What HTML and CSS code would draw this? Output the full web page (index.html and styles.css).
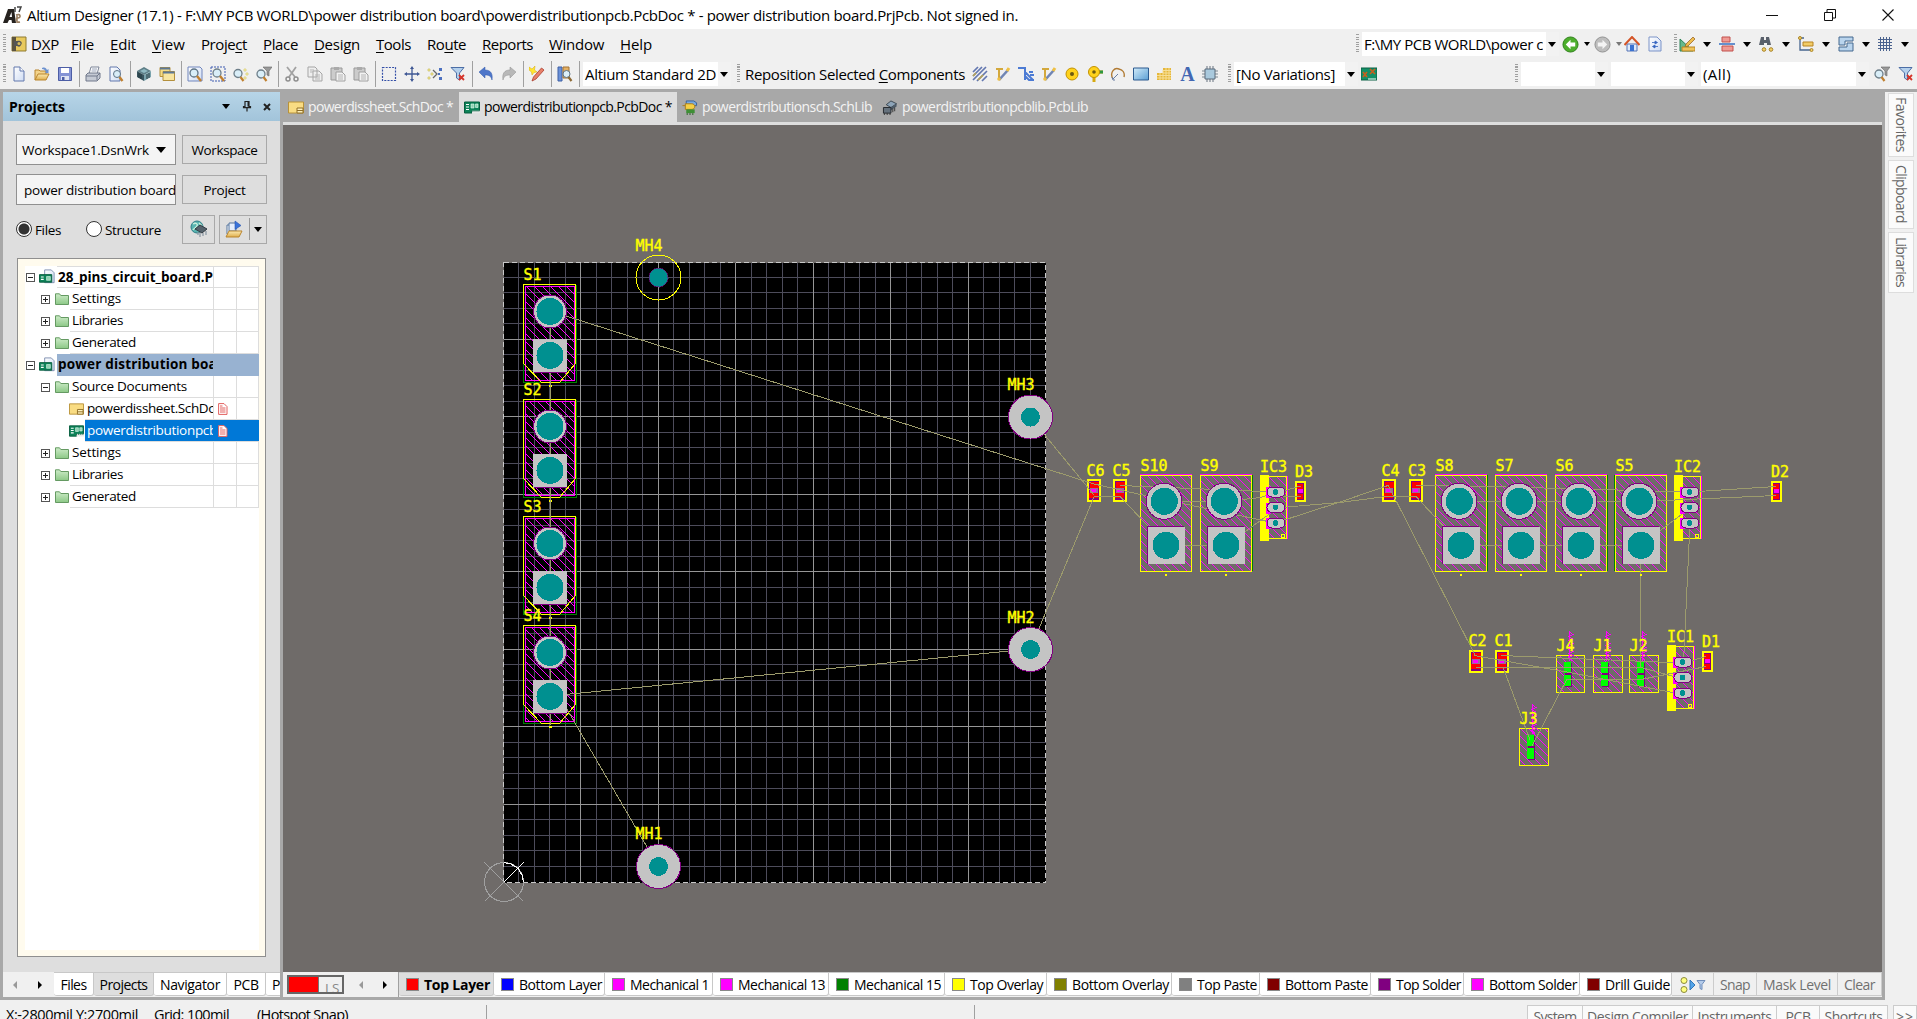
FILE: index.html
```html
<!DOCTYPE html>
<html lang="en">
<head>
<meta charset="utf-8">
<title>Altium Designer (17.1)</title>
<link rel="stylesheet" href="styles.css">
</head>
<body>
<svg class="sprite" width="0" height="0">
  <defs>
    <linearGradient id="gPage" x1="0" y1="0" x2="1" y2="1"><stop offset="0" stop-color="#fff"/><stop offset="1" stop-color="#cfdcf3"/></linearGradient>
    <linearGradient id="gGold" x1="0" y1="0" x2="0" y2="1"><stop offset="0" stop-color="#fbe9b0"/><stop offset="1" stop-color="#dfae4c"/></linearGradient>
    <linearGradient id="gGreen" x1="0" y1="0" x2="0" y2="1"><stop offset="0" stop-color="#cdebc8"/><stop offset="1" stop-color="#8cc886"/></linearGradient>
    <linearGradient id="gBlue" x1="0" y1="0" x2="1" y2="1"><stop offset="0" stop-color="#d2ecfa"/><stop offset="1" stop-color="#5c9fd4"/></linearGradient>
    <symbol id="logo" viewBox="0 0 20 20"><path d="M1 18 6 4h6l2 14h-4l-.5-3H7l-1.500 3z" fill="#26221f"/><path d="M7.500 12 9.500 7l.5 5z" fill="#fff"/><path d="M13 2v5M15 2h4l-2 5" stroke="#444" stroke-width="1.500" fill="none"/><path d="M14 10c5-2 5 3 2 3s-2 5 2 4M15 10v8" stroke="#9a8064" stroke-width="1.600" fill="none"/></symbol>
    <symbol id="dxp" viewBox="0 0 16 16"><path d="M1 1h14v14H1z" fill="#e8c95d" stroke="#8f7a30"/><path d="M1 1h4v14H1z" fill="#5b5340"/><path d="M3 5h3c4-1 6 2 4 4-1 2-2 2-4 1H3z" fill="#555"/><circle cx="8" cy="7.500" r="1.500" fill="#d7bd5a"/></symbol>
    <symbol id="new" viewBox="0 0 16 16"><path d="M3 1h6l4 4v10H3z" fill="url(#gPage)" stroke="#6279ad"/><path d="M9 1v4h4" fill="#fff" stroke="#6279ad"/></symbol>
    <symbol id="open" viewBox="0 0 16 16"><path d="M1 14V4h4l1 1h6v3" fill="#f3d48c" stroke="#b9852f"/><path d="M8 2c3-1 4 0 5 2l1.500-1v4h-4l1.500-1C11 4 10 3 8 3" fill="#6d92cf"/><path d="m1 14 3-6h11l-3 6z" fill="url(#gGold)" stroke="#b9852f"/></symbol>
    <symbol id="save" viewBox="0 0 16 16"><path d="M1.500 1.500h13v13h-13z" fill="#8493d5" stroke="#4c5da5"/><path d="M4 2h8v5H4z" fill="#fff"/><path d="M4 10h8v4H4z" fill="#dfe4f2"/><path d="M5 11h2.500v3H5z" fill="#4c5da5"/></symbol>
    <symbol id="print" viewBox="0 0 16 16"><path d="m4 8 2-7h8l-2 7z" fill="#fff" stroke="#7d8598"/><path d="M7 3h5M6.500 5h5" stroke="#98a2b8"/><path d="m1 9 2-2h12v5l-3 3H1z" fill="#c5cad4" stroke="#70788b"/><path d="M1 10h11v4M12 10l3-3" stroke="#70788b" fill="none"/></symbol>
    <symbol id="preview" viewBox="0 0 16 16"><path d="M2 1h7l3 3v11H2z" fill="url(#gPage)" stroke="#6279ad"/><circle cx="9" cy="8" r="3.500" fill="#d8ecf7" stroke="#5d7385"/><path d="m11.500 11 3 4" stroke="#c08030" stroke-width="2.400"/></symbol>
    <symbol id="cube" viewBox="0 0 16 16"><path d="m8 1 7 4-7 4-7-4z" fill="#5e7f88"/><path d="m1 5 7 4v6l-7-4z" fill="#38545e"/><path d="m15 5-7 4v6l7-4z" fill="#7aa3ad"/><path d="M3 7v5m2-4v5m6-5v5m2-6v5" stroke="#22363d"/><path d="m4 5 4-2 4 2-4 2z" fill="#8fb9c2"/></symbol>
    <symbol id="sheets" viewBox="0 0 16 16"><path d="M1 1.500h10v9H1z" fill="#f5dc86" stroke="#b4903d"/><path d="M4 5.500h11.500v9H4z" fill="#f8e5a0" stroke="#b4903d"/><path d="M1 1.500h10v2H1zM4 5.500h11.500v2H4z" fill="#5d7896"/></symbol>
    <symbol id="zdoc" viewBox="0 0 16 16"><path d="M1 1h12l2 2v12H1z" fill="url(#gPage)" stroke="#7186bd"/><circle cx="7" cy="7" r="4" fill="#d9eef8" stroke="#5d7385" stroke-width="1.300"/><path d="m10 10 4 5" stroke="#c08030" stroke-width="2.400"/></symbol>
    <symbol id="zsel" viewBox="0 0 16 16"><path d="M1 1h14v14H1z" fill="none" stroke="#3c5ab0" stroke-dasharray="2 1"/><circle cx="7" cy="7" r="4" fill="#d9eef8" stroke="#6e7f8a" stroke-width="1.300"/><path d="m10 10 4 5" stroke="#c08030" stroke-width="2.400"/></symbol>
    <symbol id="zpts" viewBox="0 0 16 16"><circle cx="5" cy="7.500" r="4" fill="#d9eef8" stroke="#6e7f8a" stroke-width="1.300"/><path d="m7.500 11 3 4" stroke="#c08030" stroke-width="2.200"/><path d="M11 3h2v2h-2zm2 4h2v2h-2zm-2 4h2v2h-2z" fill="#fffbc4" stroke="#d6c969" stroke-width=".7"/></symbol>
    <symbol id="zfil" viewBox="0 0 16 16"><circle cx="5" cy="8" r="4" fill="#d9eef8" stroke="#6e7f8a" stroke-width="1.300"/><path d="m7.500 11 3 4" stroke="#c08030" stroke-width="2.200"/><path d="M7 1h9l-3 4v5l-2-1V5z" fill="#999" stroke="#666" stroke-width=".6"/></symbol>
    <symbol id="cut" viewBox="0 0 16 16"><path d="M3 1 11 11M12 1 5 11" stroke="#a2a2a2" stroke-width="1.800"/><circle cx="4" cy="13" r="2" fill="none" stroke="#8e8e8e" stroke-width="1.500"/><circle cx="12" cy="13" r="2" fill="none" stroke="#8e8e8e" stroke-width="1.500"/></symbol>
    <symbol id="copy" viewBox="0 0 16 16"><path d="M1 1h7l2 2v8H1zM6 5h6l3 3v7H6z" fill="#eee" stroke="#a5a5a5"/><path d="M3 4h4M3 6h3M8 9h5M8 11h5M8 13h5" stroke="#b5b5b5"/></symbol>
    <symbol id="paste" viewBox="0 0 16 16"><path d="M1 2h11v12H1z" fill="#ccc" stroke="#999"/><path d="M4 1h5v3H4z" fill="#aaa"/><path d="M6 6h6l3 3v6H6z" fill="#f2f2f2" stroke="#a0a0a0"/><path d="M8 9h5M8 11h5M8 13h5" stroke="#b5b5b5"/></symbol>
    <symbol id="select" viewBox="0 0 16 16"><path d="M1.500 1.500h13v13h-13z" fill="none" stroke="#3550a8" stroke-width="1.200" stroke-dasharray="2 1.200"/></symbol>
    <symbol id="move" viewBox="0 0 16 16"><path d="M8 2v12M2 8h12" stroke="#3e5794" stroke-width="1.300"/><path d="M8 0l2 3H6zM8 16l2-3H6zM0 8l3-2v4zM16 8l-3-2v4z" fill="#3e5794"/></symbol>
    <symbol id="desel" viewBox="0 0 16 16"><path d="m6 4 4 4-4 4" stroke="#666" stroke-width="1.300" fill="none"/><path d="M1 3h2v2H1zm3 4h2v2H4zM1 11h2v2H1z" fill="#fff7a6" stroke="#bfb14e" stroke-width=".6"/><path d="M12 2h3v3h-3zm0 9h3v3h-3zm-1-4h2v2h-2z" fill="#4c70c0"/></symbol>
    <symbol id="clrfil" viewBox="0 0 16 16"><path d="M1 1.500h13L9.500 7v7l-3-2V7z" fill="#b4d0ec" stroke="#4c6ea6"/><path d="m9 9 5 5M14 9l-5 5" stroke="#d5352b" stroke-width="1.800"/></symbol>
    <symbol id="undo" viewBox="0 0 16 16"><path d="M1 6 7 1v3c6 0 8 4 7 10-1-4-3-5-7-5v3z" fill="#4e76c9" stroke="#3058ab" stroke-width=".5"/></symbol>
    <symbol id="redo" viewBox="0 0 16 16"><path d="M15 6 9 1v3C3 4 1 8 2 14c1-4 3-5 7-5v3z" fill="#b8b8b8" stroke="#8f8f8f" stroke-width=".5"/></symbol>
    <symbol id="wand" viewBox="0 0 16 16"><path d="m12.500 2 2.500 2L7 13l-4 2 1.500-4z" fill="#e8806a" stroke="#a83c2c" stroke-width=".8"/><path d="m0 1 3 2 3-3-.5 4L8 6l-3 .5L3 9l-.5-3L0 4z" fill="#ffe62e" stroke="#d8a810" stroke-width=".5"/></symbol>
    <symbol id="browse" viewBox="0 0 16 16"><path d="M1 1h4v14H1z" fill="#6a91d8" stroke="#3e60a5"/><path d="M6 1h6v11H6z" fill="#e4b063" stroke="#a27234"/><circle cx="9.500" cy="8" r="3.500" fill="#dceff8" stroke="#5d7385"/><path d="m11.500 11 3 4" stroke="#8d6a35" stroke-width="2.200"/></symbol>
    <symbol id="multi" viewBox="0 0 16 16"><path d="M1 6 6 1M1 10l9-9M1 14 14 1M5 15 15 5M10 15l5-5" stroke="#6377b0" stroke-width="1.700"/><path d="M1 10l3-3M6 14l5-5" stroke="#b7a354" stroke-width="1.700"/></symbol>
    <symbol id="route" viewBox="0 0 16 16"><path d="M1 3h7M4 3v10" stroke="#d3a83c" stroke-width="2"/><path d="m4 14 9-10" stroke="#7186b4" stroke-width="2.600"/><path d="m12 5 2-3" stroke="#efc043" stroke-width="3"/><circle cx="4" cy="13" r="1.800" fill="#efc043"/></symbol>
    <symbol id="diff" viewBox="0 0 16 16"><path d="M0 2h7v12M7 6l8 8M7 10l4 4h5M11 6h4M12 9h4" fill="none" stroke="#4c7bd4" stroke-width="2"/></symbol>
    <symbol id="pad" viewBox="0 0 16 16"><circle cx="8" cy="8" r="6" fill="#ffd21c" stroke="#c39200"/><circle cx="8" cy="8" r="2" fill="#6c5a12"/></symbol>
    <symbol id="via" viewBox="0 0 16 16"><path d="M7 9v7M9 6h7" stroke="#d6a912" stroke-width="3"/><path d="M11 6h5" stroke="#2e9740" stroke-width="3"/><circle cx="7" cy="6" r="5.500" fill="#ffd21c" stroke="#c39200"/><circle cx="7" cy="6" r="1.800" fill="#6c5a12"/></symbol>
    <symbol id="arc" viewBox="0 0 16 16"><path d="M3 13C-1 6 5 1 9 3c4 1 6 4 5 8" fill="none" stroke="#b17b34" stroke-width="1.400"/><path d="m3 13 5-5M2 11l1 3h2" stroke="#687da2" fill="none"/></symbol>
    <symbol id="fill" viewBox="0 0 16 16"><path d="M.5 2h15v12H.5z" fill="url(#gBlue)" stroke="#2c5b90"/></symbol>
    <symbol id="poly" viewBox="0 0 16 16"><path d="M1 7h6V2h8v12H1z" fill="#e5b73b"/><path d="M1 9.500h14M1 12h14M7 4.500h8M7 7h8M4 7v7M7 4v10M10 2v12M13 2v12" stroke="#f7df96"/></symbol>
    <symbol id="dev" viewBox="0 0 16 16"><path d="M5 0v16M8 0v16M11 0v16M0 5h16M0 8h16M0 11h16" stroke="#7d8792" stroke-width="1.200"/><path d="M3 3h10v10H3z" fill="#a9c9dd" stroke="#5b6b7a"/></symbol>
    <symbol id="variant" viewBox="0 0 16 16"><path d="M0 2h16v12H0z" fill="#139067" stroke="#0a6145"/><path d="m2 6 4 5M6 6l-4 5M9 3l5 5M14 3 9 8" stroke="#c9601e" stroke-width="1.700"/><path d="M8 12v2m2-2v2m2-2v2m2-2v2" stroke="#fff"/></symbol>
    <symbol id="back" viewBox="0 0 18 18"><circle cx="9" cy="9" r="8" fill="#4cae2c" stroke="#2c7d18"/><path d="M9 4 4 9l5 5v-3h5V7H9z" fill="#fff"/></symbol>
    <symbol id="fwd" viewBox="0 0 18 18"><circle cx="9" cy="9" r="8" fill="#bdbdbd" stroke="#8e8e8e"/><path d="m9 4 5 5-5 5v-3H4V7h5z" fill="#f4f4f4"/></symbol>
    <symbol id="home" viewBox="0 0 16 16"><path d="M3 8h10v7H3z" fill="#dfeafa" stroke="#5474b6"/><path d="M.5 9 8 1l7.500 8" fill="none" stroke="#d45528" stroke-width="2"/><path d="M6 9h4v6H6z" fill="#3a72d1"/></symbol>
    <symbol id="refresh" viewBox="0 0 16 16"><path d="M2 1h8l4 4v10H2z" fill="url(#gPage)" stroke="#7c94c8"/><path d="M5 6.500h4M8 5l2.500 1.500L8 8zM11 10.500H7M8 9l-2.500 1.500L8 12z" stroke="#3565c0" stroke-width=".8" fill="#3565c0"/></symbol>
    <symbol id="util" viewBox="0 0 16 16"><path d="M1 3v12h13z" fill="#67b98d" stroke="#2c8358"/><path d="m6 11 1-3 7-7 2 2-7 7z" fill="#f0bd4d" stroke="#8d5a20" stroke-width=".7"/><path d="M3 11h13v4H3z" fill="#efc35a" stroke="#b78422"/></symbol>
    <symbol id="align" viewBox="0 0 16 16"><path d="M3 1h8v5H3zM3 10h11v5H3z" fill="#f09a94" stroke="#c1504c"/><path d="M0 8h16" stroke="#4278c6" stroke-width="1.600"/></symbol>
    <symbol id="find" viewBox="0 0 16 16"><path d="M3 1h3v3h2V1h3l2 8H9V7H6v2H1z" fill="#59606b"/><circle cx="6" cy="13.500" r="1.800" fill="#f2cf66" stroke="#a8842a"/><circle cx="13" cy="13.500" r="1.800" fill="#f2cf66" stroke="#a8842a"/></symbol>
    <symbol id="dims" viewBox="0 0 16 16"><path d="M2 2v12h11M2 2h4" stroke="#47658f" stroke-width="1.300" fill="none"/><path d="M5 6h10v4H5z" fill="#f2cc67" stroke="#b88422"/><circle cx="2" cy="2" r="1.500" fill="#f2cf66" stroke="#a8842a"/><circle cx="13.500" cy="14" r="1.500" fill="#f2cf66" stroke="#a8842a"/></symbol>
    <symbol id="room" viewBox="0 0 16 16"><path d="M1 1h14v4H7v4H1zM15 7v8H1v-4h8V7z" fill="#b9d4ed" stroke="#45688f"/></symbol>
    <symbol id="grid" viewBox="0 0 16 16"><path d="M3.500 1v14M6.500 1v14M9.500 1v14M12.500 1v14M1 3.500h14M1 6.500h14M1 9.500h14M1 12.500h14" stroke="#4a628e"/></symbol>
    <symbol id="sch" viewBox="0 0 16 14"><path d="M.5 1.500h15v11H.5z" fill="#f9dc83" stroke="#b99239"/><path d="M9 7.500h6v5H9zM9 10h6" fill="#fff1bb" stroke="#8f6f28"/></symbol>
    <symbol id="pcb" viewBox="0 0 16 14"><path d="M.5 1.500h15v9H8v2H.5z" fill="#0d8258" stroke="#075e3e"/><path d="M2 4h3M2 6.500h3M2 9h3" stroke="#fff" stroke-width="1.200"/><path d="M7 3.500h3v4H7zM11.500 3.500H14V7h-2.500z" fill="#8fd0b0" stroke="#e2fff2" stroke-width=".6"/><path d="M8 12h8M9 10v3m2-3v3m2-3v3m2-3v3" stroke="#e7e7e7"/></symbol>
    <symbol id="prj" viewBox="0 0 18 16"><path d="M6 .5h7l3 3V14H6z" fill="url(#gPage)" stroke="#8090b0"/><path d="M.5 5.500h13v8H.5z" fill="#0d8258" stroke="#075e3e"/><path d="M2 8h3M2 10.500h3" stroke="#fff" stroke-width="1.200"/><path d="M8 7.500h4v4H8z" fill="#8fd0b0" stroke="#e2fff2" stroke-width=".6"/></symbol>
    <symbol id="schlib" viewBox="0 0 16 16"><path d="M4 1h8l3 2v3H4z" fill="#78a9df" stroke="#345f9c"/><path d="M0 6h14" stroke="#a77a1b"/><path d="M3 4h7c4 0 4 6 0 6H3z" fill="#f5d045" stroke="#a77a1b"/><path d="M4 10h9v4H4z" fill="#3e8f35"/><path d="M5 14v2m3-2v2m3-2v2" stroke="#245d1e"/></symbol>
    <symbol id="pcblib" viewBox="0 0 16 16"><path d="m9 1 6 3-6 4-5-3z" fill="#8ca3b7" stroke="#39444f"/><path d="m15 4-6 4v3l6-4z" fill="#4d5b68"/><path d="M1 8h8v6H1z" fill="#65717c" stroke="#23282d"/><path d="M2 14v2m3-2v2m3-2v2M11 9v4m2-5v4" stroke="#333"/></symbol>
    <symbol id="folder" viewBox="0 0 14 12"><path d="M.5 11.500V.8h4l1.300 1.700h7.700v9z" fill="url(#gGreen)" stroke="#659a62"/></symbol>
    <symbol id="moddoc" viewBox="0 0 10 12"><path d="M.6.600h5.400l3 3v7.800H.6z" fill="#fff" stroke="#e2605f"/><path d="M2 5h5.500M2 7h5.500M2 9h5.500M2 3h2.500" stroke="#e2605f"/></symbol>
    <symbol id="world" viewBox="0 0 18 18"><circle cx="7" cy="7" r="6" fill="#58b4b0" stroke="#2e7e86"/><path d="M3 4c3-2 5 0 4 2s-3 2-4 4M9 3l3 3" stroke="#c8efdd" stroke-width="1.500" fill="none"/><path d="m10 5 7 4-5 4-7-4z" fill="#55626c" stroke="#313a42"/><path d="M8 12v3m2-2v4m3-4v3m3-5v4" stroke="#8795a1" stroke-width="1.200"/></symbol>
    <symbol id="runprj" viewBox="0 0 18 18"><path d="M2 5h7v9H2z" fill="#fff" stroke="#54749d"/><path d="M4 3h7v8H4z" fill="#e6eefb" stroke="#54749d"/><path d="m10 1 6 4.500-6 4z" fill="#3b74da" stroke="#2554ae" stroke-width=".6"/><path d="m1 17 3-6h13l-3 6z" fill="url(#gGold)" stroke="#b9852f"/></symbol>
    <symbol id="maskicons" viewBox="0 0 26 18"><circle cx="4" cy="4.500" r="3" fill="#ffff80" stroke="#8b8b3c"/><circle cx="4" cy="13.500" r="3" fill="#ffff80" stroke="#8b8b3c"/><path d="m10 4 5 5-5 5z" fill="#55a5e8" stroke="#3176b9"/><path d="M17 4.500h8l-3 4v5l-2-1V8.500z" fill="#b4cbe9" stroke="#6e8dba"/></symbol>
    <symbol id="min" viewBox="0 0 12 12"><path d="M0 6.500h12" stroke="#111"/></symbol>
    <symbol id="max" viewBox="0 0 12 12"><path d="M.5 3.500h8v8h-8zM3 3V.5h8.500V9H9" fill="none" stroke="#111"/></symbol>
    <symbol id="close" viewBox="0 0 12 12"><path d="m.5.500 11 11m0-11-11 11" stroke="#111" stroke-width="1.100"/></symbol>
    <symbol id="xbold" viewBox="0 0 8 8"><path d="m1 1 6 6m0-6-6 6" stroke="#222" stroke-width="2"/></symbol>
    <symbol id="pin" viewBox="0 0 10 10"><path d="M3 0h4v5h1.500v1.200h-7V5H3zM5 6v4" fill="none" stroke="#222" stroke-width="1.200"/><path d="M5.500 0H7v5H5.500z" fill="#222"/></symbol>
  </defs>
</svg>

<div class="app">
  <header class="titlebar">
    <svg class="logo"><use href="#logo"/></svg>
    <span class="title" data-w="991">Altium Designer (17.1) - F:\MY PCB WORLD\power distribution board\powerdistributionpcb.PcbDoc * - power distribution board.PrjPcb. Not signed in.</span>
    <div class="winbtns"><svg><use href="#min"/></svg><svg><use href="#max"/></svg><svg><use href="#close"/></svg></div>
  </header>

  <nav class="menubar">
    <i class="grip"></i>
    <svg class="i16 dxp"><use href="#dxp"/></svg>
    <div class="menu">
      <span class="m-dxp" data-w="28">D<u>X</u>P</span><span data-w="23"><u>F</u>ile</span><span data-w="26"><u>E</u>dit</span><span data-w="33"><u>V</u>iew</span><span data-w="46">Proje<u>c</u>t</span><span data-w="35"><u>P</u>lace</span><span data-w="46"><u>D</u>esign</span><span data-w="35"><u>T</u>ools</span><span data-w="39">Ro<u>u</u>te</span><span data-w="51"><u>R</u>eports</span><span data-w="55"><u>W</u>indow</span><span data-w="32"><u>H</u>elp</span>
    </div>
    <div class="navbar">
      <i class="grip"></i>
      <div class="combo path"><span data-w="179">F:\MY PCB WORLD\power c</span><b></b></div>
      <svg class="i18"><use href="#back"/></svg><b class="arr"></b>
      <svg class="i18 fwd"><use href="#fwd"/></svg><b class="arr dim"></b>
      <svg class="i16 home"><use href="#home"/></svg><svg class="i16 refresh"><use href="#refresh"/></svg>
    </div>
    <div class="utilbar">
      <i class="grip"></i>
      <div><svg class="i16"><use href="#util"/></svg><b class="arr"></b></div>
      <div><svg class="i16"><use href="#align"/></svg><b class="arr"></b></div>
      <div><svg class="i16"><use href="#find"/></svg><b class="arr"></b></div>
      <div><svg class="i16"><use href="#dims"/></svg><b class="arr"></b></div>
      <div><svg class="i16"><use href="#room"/></svg><b class="arr"></b></div>
      <div><svg class="i16"><use href="#grid"/></svg><b class="arr"></b></div>
    </div>
  </nav>

  <div class="toolbar">
    <i class="grip"></i>
    <div class="tools main">
      <svg><use href="#new"/></svg><svg><use href="#open"/></svg><svg><use href="#save"/></svg><hr>
      <svg><use href="#print"/></svg><svg><use href="#preview"/></svg><hr>
      <svg><use href="#cube"/></svg><svg><use href="#sheets"/></svg><hr>
      <svg><use href="#zdoc"/></svg><svg><use href="#zsel"/></svg><svg><use href="#zpts"/></svg><svg><use href="#zfil"/></svg><hr>
      <svg><use href="#cut"/></svg><svg><use href="#copy"/></svg><svg><use href="#paste"/></svg><svg><use href="#paste"/></svg><hr>
      <svg><use href="#select"/></svg><svg><use href="#move"/></svg><svg><use href="#desel"/></svg><svg><use href="#clrfil"/></svg><hr>
      <svg><use href="#undo"/></svg><svg><use href="#redo"/></svg><hr>
      <svg><use href="#wand"/></svg><hr>
      <svg><use href="#browse"/></svg><hr>
    </div>
    <div class="combo view"><span data-w="131">Altium Standard 2D</span><b></b></div>
    <i class="grip"></i>
    <span class="repo" data-w="220">Reposition Selected <u>C</u>omponents</span>
    <div class="tools">
      <svg><use href="#multi"/></svg><svg><use href="#route"/></svg><svg><use href="#diff"/></svg><svg><use href="#route"/></svg><svg><use href="#pad"/></svg><svg><use href="#via"/></svg><svg><use href="#arc"/></svg><svg><use href="#fill"/></svg><svg><use href="#poly"/></svg><span class="txt-a">A</span><svg><use href="#dev"/></svg>
    </div>
    <i class="grip g-var"></i>
    <div class="combo vars"><span data-w="99">[No Variations]</span><b></b></div>
    <svg class="i16 variant"><use href="#variant"/></svg>
    <div class="filterbar">
      <i class="grip"></i>
      <div class="combo f1"><b></b></div>
      <div class="combo f1"><b></b></div>
      <div class="combo f2"><span data-w="28">(All)</span><b></b></div>
      <svg class="i16"><use href="#zfil"/></svg><svg class="i16"><use href="#clrfil"/></svg>
    </div>
  </div>

  <main class="work">
    <aside class="panel">
      <div class="phead"><strong data-w="56">Projects</strong><b class="arr"></b><svg class="pin"><use href="#pin"/></svg><svg class="px"><use href="#xbold"/></svg></div>
      <div class="pbody">
        <div class="prow"><div class="field"><span data-w="127">Workspace1.DsnWrk</span><b class="arr"></b></div><button><span data-w="66">Workspace</span></button></div>
        <div class="prow"><div class="field f-in"><span data-w="152">power distribution board</span></div><button><span data-w="42">Project</span></button></div>
        <div class="prow opts">
          <i class="radio on"></i><span data-w="26">Files</span>
          <i class="radio r2"></i><span data-w="56">Structure</span>
          <button class="b1"><svg><use href="#world"/></svg></button>
          <button class="b2"><svg><use href="#runprj"/></svg><i></i><b class="arr"></b></button>
        </div>
        <div class="treebox"><div class="tree" id="tree"></div></div>
      </div>
      <div class="ptabs">
        <span class="arrows"><i class="la"></i><i class="ra"></i></span>
        <span class="t1"><span data-w="26">Files</span></span><span class="t2 on"><span data-w="48">Projects</span></span><span class="t3"><span data-w="60">Navigator</span></span><span class="t4"><span data-w="25">PCB</span></span><span class="t5">P</span>
      </div>
    </aside>

    <section class="doc">
      <div class="doctabs">
        <span class="d1"><svg><use href="#sch"/></svg><span data-w="145">powerdissheet.SchDoc *</span></span>
        <span class="d2 on"><svg><use href="#pcb"/></svg><span data-w="188">powerdistributionpcb.PcbDoc *</span></span>
        <span class="d3"><svg><use href="#schlib"/></svg><span data-w="170">powerdistributionsch.SchLib</span></span>
        <span class="d4"><svg><use href="#pcblib"/></svg><span data-w="186">powerdistributionpcblib.PcbLib</span></span>
      </div>
      <svg class="canvas" id="canvas" width="1599" height="847" viewBox="283 125 1599 847"></svg>
      <div class="layers">
        <div class="ls"><i></i><span>LS</span></div>
        <span class="arrows"><i class="la"></i><i class="ra"></i></span>
        <div class="ltabs" id="layers"></div>
        <div class="lbtns"><span class="lb1"><svg><use href="#maskicons"/></svg></span><span class="lb2"><span data-w="30">Snap</span></span><span class="lb3"><span data-w="68">Mask Level</span></span><span class="lb4"><span data-w="31">Clear</span></span></div>
      </div>
    </section>

    <aside class="side">
      <span class="s1"><span data-h="55">Favorites</span></span><span class="s2"><span data-h="58">Clipboard</span></span><span class="s3"><span data-h="50">Libraries</span></span>
    </aside>
  </main>

  <footer class="status">
    <span class="c1" data-w="132">X:-2800mil Y:2700mil</span><span class="c2" data-w="75">Grid: 100mil</span><span class="c3" data-w="91">(Hotspot Snap)</span>
    <i class="v1"></i><i class="v2"></i>
    <div class="sbtns"><span class="p1"><span data-w="43">System</span></span><span class="p2"><span data-w="101">Design Compiler</span></span><span class="p3"><span data-w="74">Instruments</span></span><span class="p4"><span data-w="25">PCB</span></span><span class="p5"><span data-w="58">Shortcuts</span></span><span class="p6">&gt;&gt;</span></div>
  </footer>
</div>
<script src="app.js"></script>
</body>
</html>
```
FILE: styles.css
```css
* { box-sizing: border-box; }
html, body { margin: 0; height: 100%; overflow: hidden; }
body { font: 15px/20px "Open Sans", "Noto Sans", sans-serif; color: #000; background: #f0f0f0; }
.sprite { position: absolute; }
svg { flex: none; }
u { text-underline-offset: 2px; text-decoration-thickness: 1px; }
span, strong { white-space: nowrap; }
.app { display: flex; flex-direction: column; width: 1917px; height: 1019px; overflow: hidden; }

.titlebar { display: flex; align-items: center; height: 29px; background: #fff; }
.logo { width: 20px; height: 20px; margin: 0 5px 0 2px; }
.winbtns { display: flex; margin-left: auto; gap: 46px; padding-right: 23px; }
.winbtns svg { width: 12px; height: 12px; }

.grip { flex: none; width: 3px; height: 20px; background: repeating-linear-gradient(#a0a0a0 0 1px, transparent 1px 2.500px); }
.arr, .combo b { flex: none; width: 0; height: 0; border: 4px solid transparent; border-top: 5px solid #000; border-bottom: 0; }
.arr.dim { border-top-color: #777; }
.i16 { width: 16px; height: 16px; }
.i18 { width: 17px; height: 17px; }

.menubar { display: flex; align-items: center; height: 30px; padding-left: 3px; }
.dxp { margin: 0 4px 0 5px; }
.menu { display: flex; gap: 16px; }
.m-dxp { margin-right: -4px; }
.navbar { display: flex; align-items: center; width: 318px; margin-left: auto; }
.combo { display: flex; align-items: center; flex: none; height: 24px; background: linear-gradient(90deg, transparent calc(100% - 13px), #f2f2f2 0) #fff; overflow: hidden; }
.combo span { padding-left: 2px; overflow: hidden; }
.combo b { box-sizing: content-box; margin: 0 3px 0 auto; }
.path { width: 197px; margin: 0 3px 0 3px; }
.navbar .arr { margin-left: 5px; border-width: 4px 3px 0; }
.fwd { margin-left: 4px; }
.home { margin-left: 2px; }
.refresh { margin-left: 7px; }
.utilbar { display: flex; align-items: center; width: 243px; }
.utilbar div { display: flex; align-items: center; width: 40px; gap: 8px; }
.utilbar .grip { margin-right: 2px; }

.toolbar { display: flex; align-items: center; height: 30px; padding-left: 3px; }
.tools { display: flex; align-items: center; flex: none; }
.main { margin-left: 1px; }
.tools svg { width: 16px; height: 16px; margin: 0 3.500px; }
.tools hr { width: 1px; height: 26px; margin: 0 1px 0 3px; border: 0; background: #a0a0a0; }
.view { width: 148px; margin: 0 6px 0 2px; }
.repo { margin: 0 4px 0 5px; }
.txt-a { width: 23px; text-align: center; font: bold 20px/20px "Liberation Serif", serif; color: #4267b2; }
.g-var { margin-left: 6px; }
.vars { width: 124px; margin: 0 3px 0 3px; }
.filterbar { display: flex; align-items: center; width: 402px; margin-left: auto; gap: 3px; }
.f1 { width: 87px; }
.f2 { width: 168px; }
.filterbar .i16 { margin: 0 1px 0 2px; }
.filterbar .i16:last-child { margin-left: 4px; }

.work { display: flex; height: 911px; background: #a8a8a8; }
.panel { display: flex; flex-direction: column; width: 277px; height: 905px; margin: 3px 3px 0; background: #dedede; font-size: 13.500px; }
.phead { display: flex; align-items: center; height: 29px; padding-left: 6px; background: linear-gradient(#b7d5e8, #a2c4da); }
.phead strong { font-size: 14px; }
.phead .arr { margin-left: 157px; }
.pin { width: 10px; height: 11px; margin-left: 12px; }
.px { width: 8px; height: 8px; margin-left: 11px; }
.pbody { flex: 1; display: flex; flex-direction: column; padding: 13px 13px 15px; }
.prow { display: flex; height: 31px; margin-bottom: 9px; gap: 6px; }
.field { display: flex; align-items: center; width: 160px; height: 31px; padding-left: 5px; border: 1px solid #909090; background: #f4f4f4; overflow: hidden; }
.field .arr { margin-left: 7px; border-width: 6px 5px 0; }
.f-in { padding-left: 7px; }
button { display: flex; align-items: center; justify-content: center; width: 85px; height: 29px; margin: 1px 0 0; padding: 0; border: 1px solid #a9a9a9; background: #dedede; font: inherit; }
.opts { height: 29px; align-items: center; margin-bottom: 15px; gap: 0; }
.radio { flex: none; width: 16px; height: 16px; border: 1px solid #333; border-radius: 50%; background: #fff; }
.radio.on { background: radial-gradient(#333 0 5px, #fff 6px); }
.radio + span { margin-left: 3px; padding-top: 2px; }
.r2 { margin-left: 25px; }
.opts .b1 { width: 33px; margin-left: 21px; }
.opts .b2 { width: 48px; margin-left: 4px; }
.opts button svg { width: 18px; height: 18px; }
.b2 i { width: 1px; height: 22px; margin: 0 4px 0 6px; background: #999; }
.treebox { flex: 1; margin-left: 1px; width: 249px; padding: 7px 6px 6px 7px; border: 1px solid #8f8f8f; background: #fffbee; }
.tree { height: 100%; background: #fff; font-size: 13.500px; }
.node { display: flex; height: 22px; align-items: center; }
.node .exp { flex: none; position: relative; width: 9px; height: 9px; border: 1px solid #555; background: #fff; }
.exp::before, .plus::after { content: ""; position: absolute; left: 1px; top: 3px; width: 5px; height: 1px; background: #222; }
.plus::after { transform: rotate(90deg); }
.lv0 .exp { margin: 0 4px 0 1px; }
.lv1 .exp { margin: 0 5px 0 16px; }
.lv0 svg { width: 17px; height: 16px; }
.lv1 > svg { width: 14px; height: 12px; }
.lv2 > svg { width: 15px; height: 14px; margin-left: 44px; }
.cells { display: grid; flex: 1; grid-template-columns: 1fr 23px 22px; height: 22px; margin-left: 1px; border-bottom: 1px solid #ddd; }
.cells > * { border-right: 1px solid #ddd; padding-left: 2px; overflow: hidden; line-height: 21px; }
.cells svg { width: 10px; height: 12px; margin: 5px 0 0 2px; padding: 0; display: block; }
.lv0 .cells { font-weight: bold; }
.lv0 .cells > * { padding-left: 1px; }
.node:first-child .cells { border-top: 1px solid #ddd; }
.act .cells { background: #98b2d1; border-color: #98b2d1; }
.act .cells > * { border-color: #98b2d1; }
.sel .cells { background: #0078d7; color: #fff; }
.sel .cells > * { border-color: #0078d7; }
.ptabs { display: flex; height: 25px; font-size: 14px; background: #f0f0f0; overflow: hidden; }
.ptabs > span:not(.arrows) { flex: none; height: 24px; padding-top: 2px; text-align: center; background: #fff; border: 1px solid #c8c8c8; border-width: 1px 1px 1px 0; border-radius: 0 0 3px 3px; }
.ptabs .on { background: #dedede !important; }
.ptabs > .t5 { text-align: left !important; padding-left: 6px; }
.arrows { display: flex; flex: none; align-items: center; justify-content: space-between; width: 51px; padding: 0 12px 0 10px; }
.arrows i { border: 4px solid transparent; }
.la { border-right: 4px solid #999 !important; border-left: 0 !important; }
.ra { border-left: 4px solid #000 !important; border-right: 0 !important; }
.t1 { width: 40px; } .t2 { width: 60px; } .t3 { width: 73px; } .t4 { width: 39px; } .t5 { width: 20px; }

.doc { display: flex; flex-direction: column; width: 1599px; font-size: 14px; }
.doctabs { display: flex; flex: none; height: 36px; padding: 3px 0 0; border-bottom: 3px solid #dedede; color: #f4f4f4; }
.doctabs > span { display: flex; align-items: center; flex: none; padding-left: 5px; }
.doctabs svg { width: 16px; height: 15px; margin-right: 4px; }
.d1 { width: 176px; }
.d2 { width: 218px; background: #dedede; color: #000; }
.d3 { width: 200px; }
.canvas { display: block; background: #6f6b69; }
.canvas text { font: 15px "DejaVu Sans Mono", monospace; fill: #ff0; stroke: #ff0; stroke-width: .4px; }
.layers { display: flex; height: 25px; background: #f0f0f0; }
.ls { display: flex; flex: none; width: 57px; height: 19px; margin: 3px 0 0 4px; border: 2px solid #666; background: #f0f0f0; color: #888; font-size: 13.500px; overflow: hidden; }
.ls i { width: 30px; margin-right: 6px; background: #f00; border-right: 1px solid #777; }
.ls span { line-height: 22px; }
.layers .arrows { width: 55px; padding: 0 11px 0 15px; border-right: 1px solid #a0a0a0; }
.ltabs { display: flex; }
.ltab { display: flex; align-items: center; flex: none; height: 24px; border: 1px solid #c8c8c8; border-width: 1px 1px 1px 0; border-radius: 0 0 3px 3px; background: #fff; }
.ltab i { width: 13px; height: 13px; margin: 0 5px 0 7px; border: 1px solid #888; }
.ltab span { padding-top: 1px; }
.ltab.on { background: #dedede; font-weight: bold; }
.lbtns { display: flex; color: #707070; }
.lbtns > span { display: flex; align-items: center; justify-content: center; height: 24px; padding-top: 1px; border: 1px solid #ccc; border-left: 0; }
.lb1 { width: 42px; } .lb2 { width: 43px; } .lb3 { width: 81px; } .lb4 { width: 44px; }
.lbtns svg { width: 26px; height: 18px; }

.side { display: flex; flex-direction: column; width: 32px; height: 908px; margin: 3px 0 0 3px; padding: 1px 0 0 3px; background: #f0f0f0; gap: 3px; color: #666; font-size: 14px; }
.side > span { display: flex; align-items: center; justify-content: center; width: 26px; padding-bottom: 2px; border: 1px solid #ddd; background: #fbfbfb; writing-mode: vertical-rl; }
.s1 { height: 64px; } .s2 { height: 69px; } .s3 { height: 61px; }

.status { display: flex; flex: none; height: 19px; padding: 5px 0 0 6px; font-size: 14.500px; overflow: hidden; }
.status > span { flex: none; }
.c1 { width: 148px; } .c2 { width: 103px; } .c3 { width: 229px; }
.status i { width: 488px; border-left: 1px solid #a0a0a0; }
.status .v2 { width: auto; }
.sbtns { display: flex; margin-left: auto; height: 30px; color: #666; }
.sbtns > span { padding-top: 1px; border: 1px solid #ccc; border-right: 0; background: #fafafa; text-align: center; font-size: 14px; }
.p1 { width: 55px; } .p2 { width: 110px; } .p3 { width: 84px; } .p4 { width: 43px; } .p5 { width: 69px; border-right: 1px solid #ccc !important; } .p6 { width: 24px; margin: 0 0 0 5px; border-right: 1px solid #ccc !important; letter-spacing: 1px; }
```
FILE: app.js
```js
// Project tree
const TREE = [
  { lv: 0, exp: '-', icon: 'prj', text: '28_pins_circuit_board.P', w: 155 },
  { lv: 1, exp: '+', icon: 'folder', text: 'Settings', w: 49 },
  { lv: 1, exp: '+', icon: 'folder', text: 'Libraries', w: 51 },
  { lv: 1, exp: '+', icon: 'folder', text: 'Generated', w: 64 },
  { lv: 0, exp: '-', icon: 'prj', text: 'power distribution board', w: 174, cls: 'act' },
  { lv: 1, exp: '-', icon: 'folder', text: 'Source Documents', w: 115 },
  { lv: 2, icon: 'sch', text: 'powerdissheet.SchDoc', w: 135, mod: true },
  { lv: 2, icon: 'pcb', text: 'powerdistributionpcb', w: 130, mod: true, cls: 'sel' },
  { lv: 1, exp: '+', icon: 'folder', text: 'Settings', w: 49 },
  { lv: 1, exp: '+', icon: 'folder', text: 'Libraries', w: 51 },
  { lv: 1, exp: '+', icon: 'folder', text: 'Generated', w: 64 },
];
document.getElementById('tree').innerHTML = TREE.map(n => `
  <div class="node lv${n.lv} ${n.cls || ''}">
    ${n.exp ? `<i class="exp ${n.exp === '+' ? 'plus' : ''}"></i>` : ''}<svg><use href="#${n.icon}"/></svg>
    <div class="cells"><div><span data-w="${n.w}">${n.text}</span></div><div>${n.mod ? '<svg><use href="#moddoc"/></svg>' : ''}</div><div></div></div>
  </div>`).join('');

// Layer tabs: name, colour, tab width, text width
const LAYERS = [
  ['Top Layer', '#ff0000', 95, 66], ['Bottom Layer', '#0000ff', 111, 83], ['Mechanical 1', '#ff00ff', 108, 79],
  ['Mechanical 13', '#ff00ff', 116, 87], ['Mechanical 15', '#008000', 116, 87], ['Top Overlay', '#ffff00', 102, 73],
  ['Bottom Overlay', '#808000', 125, 97], ['Top Paste', '#808080', 88, 60], ['Bottom Paste', '#800000', 111, 83],
  ['Top Solder', '#800080', 93, 65], ['Bottom Solder', '#ff00ff', 116, 88], ['Drill Guide', '#800000', 92, 65],
];
document.getElementById('layers').innerHTML = LAYERS.map(([n, c, w, t], k) =>
  `<div class="ltab ${k ? '' : 'on'}" style="width:${w}px"><i style="background:${c}"></i><span data-w="${t}">${n}</span></div>`).join('');

// Board drawing
const YEL = '#ffff00', MAG = '#ff00ff', PUR = '#800080', GRY = '#c4c4c4', TEAL = '#009090', RAT = '#9c9b6c';
const out = [];
const rect = (x, y, w, h, a) => out.push(`<rect x="${x}" y="${y}" width="${w}" height="${h}" ${a}/>`);
const line = (pts, c, a = '') => out.push(`<polyline points="${pts}" fill="none" stroke="${c}" ${a}/>`);
const circ = (x, y, r, a) => out.push(`<circle cx="${x}" cy="${y}" r="${r}" ${a}/>`);
const labels = [];
const label = (x, y, s) => labels.push(`<text x="${x}" y="${y + .3}">${s}</text>`);

function board() {
  const x0 = 503.5, x1 = 1045.5, y0 = 262.5, y1 = 882.5, st = 15.49;
  rect(x0, y0, x1 - x0, y1 - y0, 'fill="#000"');
  for (const major of [false, true]) {
    const c = major ? '#969696' : '#4d4c5b';
    for (let k = 1; k < 35; k++) if ((k % 5 === 0) === major) { const x = Math.floor(x0 + k * st) + .5; line(`${x},${y0} ${x},${y1}`, c); }
    for (let k = 1; k < 40; k++) if ((k % 5 === 0) === major) { const y = Math.floor(y1 - .6 - k * 15.5) + .5; line(`${x0},${y} ${x1},${y}`, c); }
  }
  rect(x0, y0, x1 - x0, y1 - y0, 'fill="none" stroke="#c8c8c8" stroke-dasharray="5 3"');
}

function terminalOnBoard(y, name) {
  rect(525.5, y + 2, 49.500, 94, 'fill="url(#hatch)"');
  line(`576.5,${y} 576.5,${y + 98} 523.5,${y + 98} 523.5,${y + 79}`, '#008000');
  rect(525.5, y + 2, 49, 94, `fill="none" stroke="${MAG}"`);
  line(`523.5,${y + 79} 523.5,${y} 575.5,${y} 575.5,${y + 79}`, YEL);
  line(`523.5,${y + 79} 541.5,${y + 98} 559.5,${y + 98} 575.5,${y + 79}`, YEL);
  rect(549, y + 100, 3, 2, `fill="${YEL}"`);
  label(523.5, y - 4.500, name);
}
function boardPads(y) {
  circ(550, y + 27, 16.500, `fill="${GRY}" stroke="${PUR}"`);
  circ(550, y + 27, 13.500, `fill="${TEAL}"`);
  rect(533, y + 54, 34, 34, `fill="${GRY}"`);
  line(`534,${y + 88} 567,${y + 88}`, PUR);
  circ(550, y + 71, 13.500, `fill="${TEAL}"`);
}

function terminal(x, name, green) {
  rect(x, 475, 52, 96.500, 'fill="url(#hatch)"');
  if (green) line(`${x + green},475 ${x + green},571`, '#008000');
  line(`${x},474.5 ${x + 52},474.5`, MAG);
  rect(x + .5, 475.5, 51, 96, `fill="none" stroke="${YEL}"`);
  label(x + .5, 471, name);
}
function terminalPads(x) {
  circ(x + 24, 501.3, 18, `fill="${GRY}" stroke="${PUR}"`);
  circ(x + 24.300, 501.3, 13.500, `fill="${TEAL}"`);
  rect(x + 7.500, 526.5, 37, 37.500, `fill="${GRY}"`);
  line(`${x + 7.500},564 ${x + 7.500},526.5 ${x + 44},526.5`, PUR);
  circ(x + 26, 545.3, 13.500, `fill="${TEAL}"`);
  rect(x + 25, 574, 2, 2, `fill="${YEL}"`);
}

function cap(x, y, name, lx, ly) {
  rect(x + 1, y + 1, 12, 21, `fill="${PUR}" stroke="${YEL}" stroke-width="2"`);
  rect(x + 3, y + 9, 8, 6, 'fill="#9a6a9a"');
  rect(x + 4, y + 10, 5, 3, `fill="${MAG}"`);
  label(lx, ly, name);
  return () => { rect(x + 3, y + 3, 9, 6, 'fill="#f00"'); rect(x + 2, y + 14, 9, 5, 'fill="#f00"'); };
}
function diode(x, y, name) {
  rect(x + 1, y + 1, 9, 19, `fill="${PUR}" stroke="${YEL}" stroke-width="2"`);
  rect(x + 3, y + 8, 5, 4, `fill="${MAG}"`);
  rect(x + 2, y + 3, 6, 5, 'fill="#f00"');
  rect(x + 2, y + 13, 6, 5, 'fill="#f00"');
  label(x, y - 4, name);
}
function regulator(x, y, name) {
  rect(x, y + 2, 27, 62, 'fill="url(#hatch)"');
  line(`${x + 27.500},${y + 1} ${x + 27.500},${y + 64}`, MAG);
  rect(x + 8, y + 1.500, 18.500, 62, `fill="none" stroke="${YEL}"`);
  rect(x, y, 9, 66, `fill="${YEL}"`);
  circ(x + 23, y + 61, 2, `fill="none" stroke="${YEL}"`);
  label(x, y - 3.500, name);
}
function regulatorPins(x, y) {
  for (const dy of [17, 32.500, 48]) {
    rect(x + 6, y + dy - 5, 5, 11, `fill="${MAG}"`);
    rect(x + 7, y + dy - 5, 18, 10, `rx="5" fill="${GRY}" stroke="${PUR}"`);
    circ(x + 15.500, y + dy, 2.700, `fill="${TEAL}"`);
  }
}
function jumper(x, y, w, px, name) {
  rect(x, y, w, 37, 'fill="url(#hatch)"');
  rect(x, y, w, 37, `fill="none" stroke="${YEL}"`);
  const tx = px + 5;
  line(`${tx},${y - 24} ${tx + 4},${y - 21} ${tx},${y - 19} ${tx + 3},${y - 17} ${tx},${y - 15} ${tx + 4},${y - 12} ${tx},${y - 10} ${tx + 4},${y - 8} ${tx},${y - 6} ${tx + 4},${y - 4} ${tx},${y - 2} ${tx + 4},${y} ${tx},${y + 2} ${tx + 3},${y + 5}`, MAG);
  line(`${tx},${y - 24} ${tx},${y + 5}`, MAG);
  rect(px + 1, y + 7, 7, 24, `fill="${PUR}"`);
  rect(px, y + 6.500, 7, 11, 'fill="#0f0"');
  rect(px, y + 19.500, 7, 10.500, 'fill="#0f0"');
  label(x, y - 4.500, name);
}

board();
const reds = [
  cap(1087, 479, 'C6', 1086.5, 475.5), cap(1113, 479, 'C5', 1112.5, 475.5),
  cap(1382, 479, 'C4', 1381.5, 475.5), cap(1409, 479, 'C3', 1408, 475.5),
  cap(1469, 650, 'C2', 1468.5, 646), cap(1495, 650, 'C1', 1494.5, 646),
];
const ROWS = [284.5, 399.5, 516.5, 625.5];
ROWS.forEach((y, k) => terminalOnBoard(y, 'S' + (k + 1)));
[[1140, 'S10'], [1200, 'S9', 52.5], [1435, 'S8', 52.5], [1495, 'S7'], [1555, 'S6', 52.5], [1615, 'S5', -.5]].forEach(a => terminal(...a));
[[1260, 475, 'IC3'], [1674, 475, 'IC2'], [1667, 645, 'IC1']].forEach(a => regulator(...a));
diode(1295, 481, 'D3'); diode(1771, 481, 'D2'); diode(1702, 651, 'D1');
reds.forEach(f => f());
jumper(1556.5, 655.5, 28, 1564, 'J4');
jumper(1593.5, 655.5, 29, 1601, 'J1');
jumper(1629.5, 655.5, 29, 1637, 'J2');
jumper(1519.5, 728.5, 29, 1527, 'J3');

// Unrouted connections
[
  '566,316 1094,484', '1030,417 1094,495', '1030,650 1094,497', '1094,484 1147,496 1275,523',
  '1120,485.5 1275,492', '1094,496.5 1120,496.5 1166,545', '1164,501.5 1225,501.5 1260,497.5 1301,486',
  '1166,545.5 1226,545.5 1275,510', '1275,508 1340,502.5 1386,496.5 1416,496.5', '1275,523 1340,502 1388,485.5',
  '1275,497 1301,496.5', '1416,496.5 1461,545', '1416,485.5 1488,486.5 1690,492', '1388,485 1475,655',
  '1459,501.5 1640,501.5 1675,500 1776,495.5', '1690,492 1776,486.5', '1461,545.5 1640.5,545.5 1690,508',
  '1640.5,545 1640.5,668', '1690,523 1683.5,663', '1474,655.5 1567,672 1683,694.5', '1501,655.5 1683,663',
  '1476,667.5 1641,667.5 1683,679', '1503,667 1530,740', '1567,679 1532,746', '1567,679.5 1641,679.5 1706,666.5', '1683,663 1706,656.5',
  '550.5,300 550.5,725', '550,696 1030,649', '550,680 658,866',
].forEach(p => line(p, RAT));

[1140, 1200, 1435, 1495, 1555, 1615].forEach(terminalPads);
ROWS.forEach(boardPads);
regulatorPins(1260, 475); regulatorPins(1674, 475); regulatorPins(1667, 645);

// Mounting holes
circ(658.5, 277.5, 22.500, `fill="none" stroke="${YEL}"`);
circ(658.5, 277.5, 9.500, `fill="${TEAL}" stroke="${PUR}" stroke-width=".6"`);
[[658.5, 866.5], [1030.5, 417], [1030.5, 649.5]].forEach(([x, y]) => {
  circ(x, y, 22, `fill="${GRY}" stroke="${PUR}"`);
  circ(x, y, 9.500, `fill="${TEAL}"`);
});
label(635.5, 251, 'MH4'); label(635.5, 839, 'MH1'); label(1007.5, 390, 'MH3'); label(1007.5, 622.5, 'MH2');

// Origin marker
circ(504, 882, 19.500, 'fill="none" stroke="#a0a0a0"');
line('484.5,862.5 523.5,901.5', '#a0a0a0');
line('484.5,901.5 504,882', '#a0a0a0');
line('504,882 523.5,862.5', '#fff');
line('504,862.5 511,864 518,868.5 522,875 523.5,882', '#fff');

document.getElementById('canvas').innerHTML =
  `<defs><pattern id="hatch" width="8" height="8" patternUnits="userSpaceOnUse"><path d="M-1-1 9 9" stroke="${MAG}" stroke-width="1"/></pattern></defs>
   <g shape-rendering="crispEdges">${out.join('')}</g>${labels.join('')}`;

function fit(el, size, want) {
  el.style.letterSpacing = ((want - size) / el.textContent.length).toFixed(3) + 'px';
}
document.querySelectorAll('[data-w],[data-h]').forEach(el => {
  const r = document.createRange();
  r.selectNodeContents(el);
  const b = r.getBoundingClientRect();
  if (el.dataset.w) fit(el, b.width, +el.dataset.w); else fit(el, b.height, +el.dataset.h);
});
```
